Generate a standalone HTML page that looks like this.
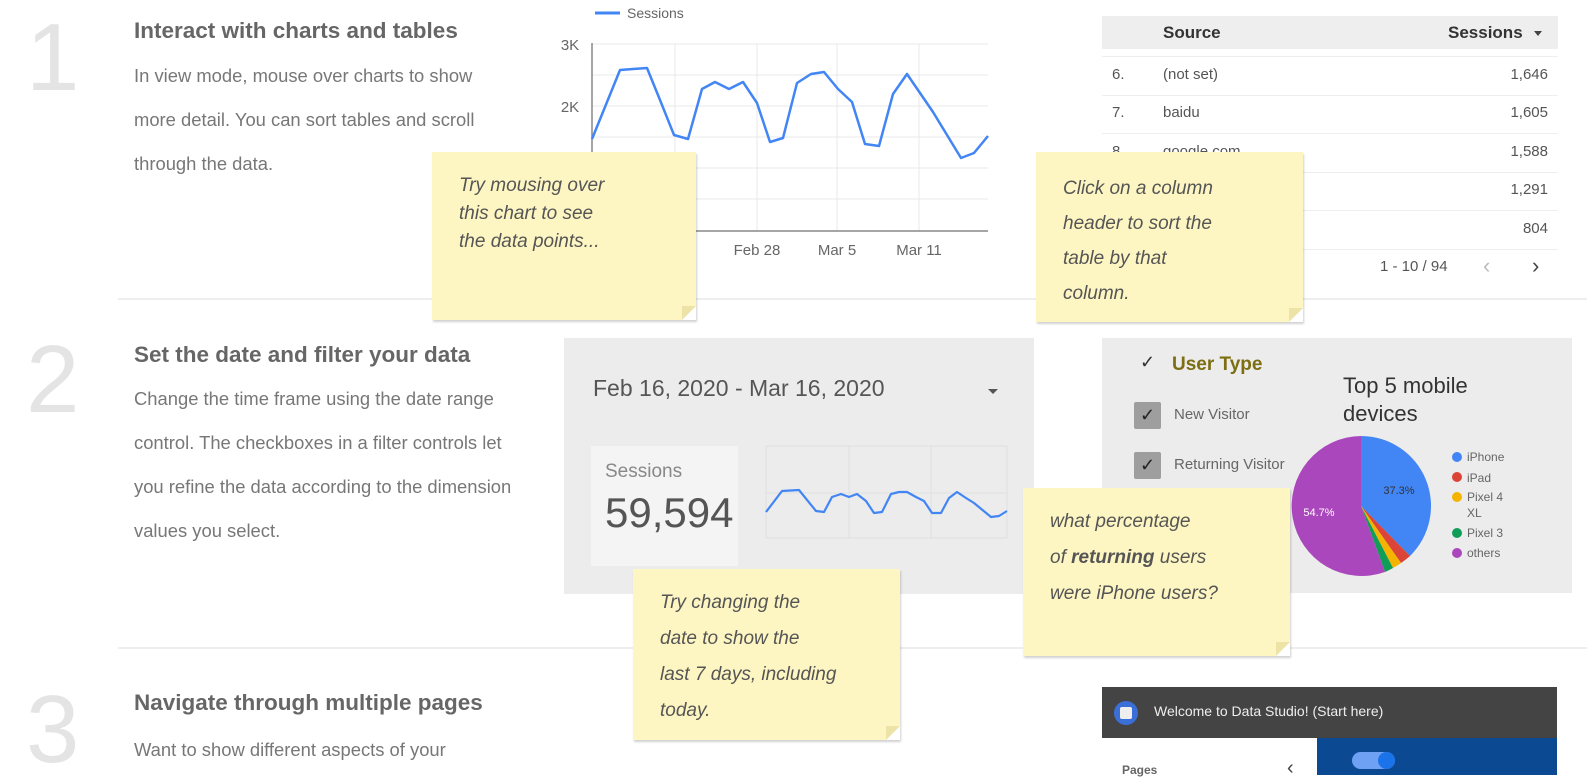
<!DOCTYPE html>
<html><head><meta charset="utf-8"><style>
*{margin:0;padding:0;box-sizing:border-box}
body{width:1587px;height:775px;overflow:hidden;background:#fff;position:relative;font-family:"Liberation Sans",sans-serif}
.a{position:absolute;white-space:nowrap}
.num{position:absolute;font-size:96px;color:#e4e4e4;font-weight:normal;line-height:1}
.h{position:absolute;font-size:22.5px;font-weight:bold;color:#666;white-space:nowrap}
.p{position:absolute;font-size:18.4px;color:#777;line-height:44px;white-space:nowrap}
.sep{position:absolute;height:2px;background:#eee}
.note{position:absolute;background:#fdf6c3;box-shadow:1px 2px 2px rgba(0,0,0,.18);font-size:19px;color:#555;font-style:italic;padding-left:27px}
.note:after{content:"";position:absolute;right:0;bottom:0;width:0;height:0;border-style:solid;border-width:14px 14px 0 0;border-color:#eee3a6 #fff transparent transparent}
.row{position:absolute;left:1102px;width:456px;font-size:15px;color:#555}
</style></head><body>

<!-- Section 1 -->
<div class="num" style="left:26px;top:10px">1</div>
<div class="h" style="left:134px;top:18px">Interact with charts and tables</div>
<div class="p" style="left:134px;top:54px">In view mode, mouse over charts to show<br>more detail. You can sort tables and scroll<br>through the data.</div>
<div class="sep" style="left:118px;top:298px;width:1469px"></div>

<!-- line chart -->
<svg class="a" style="left:0;top:0" width="1587" height="300">
 <line x1="595" y1="13" x2="620" y2="13" stroke="#4285f4" stroke-width="3"/>
 <text x="627" y="18" font-size="14" fill="#666" font-family="Liberation Sans">Sessions</text>
 <text x="570" y="50" font-size="15" fill="#666" text-anchor="middle" font-family="Liberation Sans">3K</text>
 <text x="570" y="112" font-size="15" fill="#666" text-anchor="middle" font-family="Liberation Sans">2K</text>
 <g stroke="#e8e8e8" stroke-width="1">
  <line x1="592" y1="44" x2="988" y2="44"/><line x1="592" y1="75" x2="988" y2="75"/>
  <line x1="592" y1="106" x2="988" y2="106"/><line x1="592" y1="137" x2="988" y2="137"/>
  <line x1="592" y1="168" x2="988" y2="168"/><line x1="592" y1="199" x2="988" y2="199"/>
  <line x1="675" y1="44" x2="675" y2="231"/><line x1="757" y1="44" x2="757" y2="231"/>
  <line x1="837" y1="44" x2="837" y2="231"/><line x1="919" y1="44" x2="919" y2="231"/>
 </g>
 <line x1="592" y1="43" x2="592" y2="231" stroke="#888" stroke-width="1.5"/>
 <line x1="592" y1="231" x2="988" y2="231" stroke="#888" stroke-width="1.5"/>
 <polyline fill="none" stroke="#4285f4" stroke-width="2.5" stroke-linejoin="round" points="592,139 605,107 620,70 633,69 647,68 660,100 674,135 688,139 702,89 715,82 729,89 743,82 757,103 770,142 783,138 797,83 811,74 824,72 838,89 852,102 865,144 879,146 893,94 907,74 920,93 933,112 947,135 961,158 974,153 988,136"/>
 <text x="757" y="255" font-size="15" fill="#666" text-anchor="middle" font-family="Liberation Sans">Feb 28</text>
 <text x="837" y="255" font-size="15" fill="#666" text-anchor="middle" font-family="Liberation Sans">Mar 5</text>
 <text x="919" y="255" font-size="15" fill="#666" text-anchor="middle" font-family="Liberation Sans">Mar 11</text>
</svg>

<!-- table -->
<div class="a" style="left:1102px;top:16px;width:456px;height:33px;background:#eee"></div>
<div class="a" style="left:1163px;top:23px;font-size:17px;font-weight:bold;color:#333;font-family:'Liberation Sans Narrow','Liberation Sans',sans-serif">Source</div>
<div class="a" style="left:1448px;top:23px;font-size:17px;font-weight:bold;color:#333;font-family:'Liberation Sans Narrow','Liberation Sans',sans-serif">Sessions</div>
<div class="a" style="left:1534px;top:31px;border:4px solid transparent;border-top:5px solid #444"></div>
<div class="sep" style="left:1102px;top:56px;width:456px;height:1px"></div>
<div class="row" style="top:66px"><span class="a" style="left:10px">6.</span><span class="a" style="left:61px">(not set)</span><span class="a" style="right:10px">1,646</span></div>
<div class="sep" style="left:1102px;top:95px;width:456px;height:1px"></div>
<div class="row" style="top:104px"><span class="a" style="left:10px">7.</span><span class="a" style="left:61px">baidu</span><span class="a" style="right:10px">1,605</span></div>
<div class="sep" style="left:1102px;top:133px;width:456px;height:1px"></div>
<div class="row" style="top:143px"><span class="a" style="left:10px">8.</span><span class="a" style="left:61px">google.com</span><span class="a" style="right:10px">1,588</span></div>
<div class="sep" style="left:1102px;top:172px;width:456px;height:1px"></div>
<div class="row" style="top:181px"><span class="a" style="left:10px">9.</span><span class="a" style="left:61px">m.youtube.com</span><span class="a" style="right:10px">1,291</span></div>
<div class="sep" style="left:1102px;top:210px;width:456px;height:1px"></div>
<div class="row" style="top:220px"><span class="a" style="left:10px">10.</span><span class="a" style="left:61px">bing</span><span class="a" style="right:10px">804</span></div>
<div class="sep" style="left:1102px;top:249px;width:456px;height:1px"></div>
<div class="a" style="left:1380px;top:258px;font-size:15px;color:#555">1 - 10 / 94</div>
<div class="a" style="left:1483px;top:253px;font-size:22px;color:#bbb">‹</div>
<div class="a" style="left:1532px;top:253px;font-size:22px;color:#444">›</div>

<div class="note" style="left:432px;top:152px;width:264px;height:168px;padding-top:20px;line-height:28px;font-size:19px">Try mousing over<br>this chart to see<br>the data points...</div>
<div class="note" style="left:1036px;top:152px;width:267px;height:170px;padding-top:19px;line-height:35px;font-size:19px">Click on a column<br>header to sort the<br>table by that<br>column.</div>

<!-- Section 2 -->
<div class="num" style="left:26px;top:332px">2</div>
<div class="h" style="left:134px;top:342px">Set the date and filter your data</div>
<div class="p" style="left:134px;top:377px">Change the time frame using the date range<br>control. The checkboxes in a filter controls let<br>you refine the data according to the dimension<br>values you select.</div>
<div class="sep" style="left:118px;top:647px;width:1469px"></div>

<div class="a" style="left:564px;top:338px;width:470px;height:256px;background:#ececec"></div>
<div class="a" style="left:593px;top:375px;font-size:23px;color:#555">Feb 16, 2020 - Mar 16, 2020</div>
<div class="a" style="left:988px;top:389px;border:5px solid transparent;border-top:5px solid #555"></div>
<div class="a" style="left:591px;top:446px;width:147px;height:120px;background:#f4f4f4"></div>
<div class="a" style="left:605px;top:461px;font-size:19px;color:#888">Sessions</div>
<div class="a" style="left:605px;top:489px;font-size:42px;color:#555">59,594</div>
<svg class="a" style="left:0;top:0" width="1587" height="600">
 <g stroke="#e0e0e0" stroke-width="1" fill="none">
  <rect x="766" y="446" width="241" height="92"/>
  <line x1="849" y1="446" x2="849" y2="538"/><line x1="931" y1="446" x2="931" y2="538"/>
  <line x1="766" y1="493" x2="1007" y2="493"/>
 </g>
 <polyline fill="none" stroke="#4285f4" stroke-width="2.2" stroke-linejoin="round" points="766,512 782,491 799,490 816,511 824,512 832,497 841,494 849,497 857,494 866,501 874,513 882,512 891,494 899,492 907,492 916,497 924,501 932,513 941,513 949,498 957,492 966,498 974,503 991,517 999,516 1007,511"/>
</svg>

<!-- filter + pie -->
<div class="a" style="left:1102px;top:338px;width:470px;height:255px;background:#ececec"></div>
<div class="a" style="left:1140px;top:352px;font-size:18px;color:#333">✓</div>
<div class="a" style="left:1172px;top:354px;font-size:19px;font-weight:bold;color:#7d6e12;font-family:'Liberation Sans Narrow','Liberation Sans',sans-serif">User Type</div>
<div class="a" style="left:1134px;top:402px;width:27px;height:27px;background:#9e9e9e;border-radius:2px;color:#222;font-size:18px;text-align:center;line-height:27px">✓</div>
<div class="a" style="left:1174px;top:406px;font-size:15px;color:#666">New Visitor</div>
<div class="a" style="left:1134px;top:452px;width:27px;height:27px;background:#9e9e9e;border-radius:2px;color:#222;font-size:18px;text-align:center;line-height:27px">✓</div>
<div class="a" style="left:1174px;top:456px;font-size:15px;color:#666">Returning Visitor</div>
<div class="a" style="left:1343px;top:372px;font-size:22px;color:#333;line-height:28px">Top 5 mobile<br>devices</div>
<svg class="a" style="left:0;top:0" width="1587" height="600" font-family="Liberation Sans">
 <path d="M1361,506 L1361,436 A70,70 0 0 1 1410,556 Z" fill="#4285f4"/>
 <path d="M1361,506 L1410,556 A70,70 0 0 1 1401,563 Z" fill="#db4437"/>
 <path d="M1361,506 L1401,563 A70,70 0 0 1 1393,568 Z" fill="#f4b400"/>
 <path d="M1361,506 L1393,568 A70,70 0 0 1 1385,572 Z" fill="#0f9d58"/>
 <path d="M1361,506 L1385,572 A70,70 0 1 1 1361,436 Z" fill="#ab47bc"/>
 <text x="1399" y="494" font-size="11" fill="#333" text-anchor="middle">37.3%</text>
 <text x="1319" y="516" font-size="11" fill="#fff" text-anchor="middle">54.7%</text>
 <circle cx="1457" cy="457" r="5" fill="#4285f4"/><text x="1467" y="461" font-size="12" fill="#666">iPhone</text>
 <circle cx="1457" cy="477" r="5" fill="#db4437"/><text x="1467" y="482" font-size="12" fill="#666">iPad</text>
 <circle cx="1457" cy="497" r="5" fill="#f4b400"/><text x="1467" y="501" font-size="12" fill="#666">Pixel 4</text>
 <text x="1467" y="517" font-size="12" fill="#666">XL</text>
 <circle cx="1457" cy="533" r="5" fill="#0f9d58"/><text x="1467" y="537" font-size="12" fill="#666">Pixel 3</text>
 <circle cx="1457" cy="553" r="5" fill="#ab47bc"/><text x="1467" y="557" font-size="12" fill="#666">others</text>
</svg>

<div class="note" style="left:633px;top:569px;width:267px;height:171px;padding-top:16px;line-height:36px;font-size:19px">Try changing the<br>date to show the<br>last 7 days, including<br>today.</div>
<div class="note" style="left:1023px;top:488px;width:267px;height:168px;padding-top:16px;line-height:36px;font-size:19px">what percentage<br>of <b>returning</b> users<br>were iPhone users?</div>

<!-- Section 3 -->
<div class="num" style="left:26px;top:682px">3</div>
<div class="h" style="left:134px;top:690px">Navigate through multiple pages</div>
<div class="p" style="left:134px;top:728px">Want to show different aspects of your</div>

<div class="a" style="left:1102px;top:687px;width:455px;height:51px;background:#444"></div>
<div class="a" style="left:1114px;top:701px;width:24px;height:24px;border-radius:50%;background:#3b6fd8"></div>
<div class="a" style="left:1120px;top:707px;width:12px;height:12px;border-radius:2px;background:#eee"></div>
<div class="a" style="left:1154px;top:703px;font-size:14px;color:#eee">Welcome to Data Studio! (Start here)</div>
<div class="a" style="left:1317px;top:738px;width:240px;height:37px;background:#0b4a92"></div>
<div class="a" style="left:1352px;top:752px;width:43px;height:17px;border-radius:9px;background:#6ea0f4"></div>
<div class="a" style="left:1378px;top:752px;width:17px;height:17px;border-radius:50%;background:#1a73e8"></div>
<div class="a" style="left:1122px;top:763px;font-size:12px;font-weight:bold;color:#666">Pages</div>
<div class="a" style="left:1287px;top:757px;font-size:20px;color:#444">‹</div>
</body></html>
